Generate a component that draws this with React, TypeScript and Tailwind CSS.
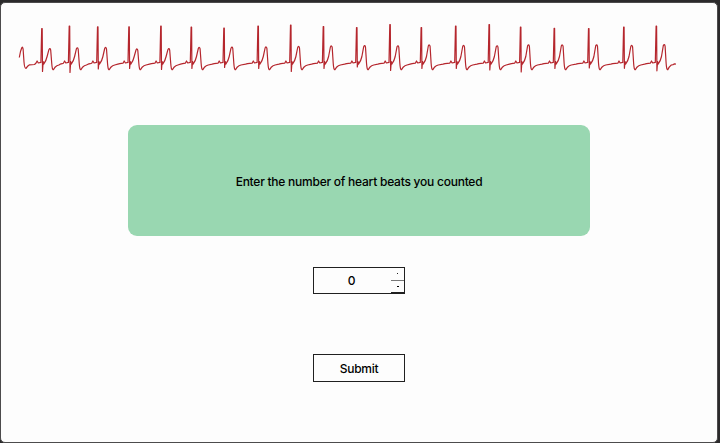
type Beat = { x: number; top: number; dip: number; wave: number };

const beats: Beat[] = [
  { x: 41.9, top: 28.5, dip: 71.5, wave: 47.2 },
  { x: 69.4, top: 26, dip: 72.5, wave: 46.3 },
  { x: 97.7, top: 26.8, dip: 69, wave: 46 },
  { x: 129, top: 26.8, dip: 68.5, wave: 47.5 },
  { x: 160.9, top: 26, dip: 69.5, wave: 47.2 },
  { x: 191.3, top: 27, dip: 68.5, wave: 46 },
  { x: 224, top: 28, dip: 67.5, wave: 45.7 },
  { x: 258.1, top: 26, dip: 68.5, wave: 45.5 },
  { x: 290.7, top: 25, dip: 71.5, wave: 45 },
  { x: 323.4, top: 26.6, dip: 68.5, wave: 44.5 },
  { x: 356.7, top: 27.5, dip: 67, wave: 44.2 },
  { x: 390, top: 24.6, dip: 70.5, wave: 44.3 },
  { x: 421.3, top: 27.5, dip: 68.5, wave: 43.5 },
  { x: 455.7, top: 26, dip: 68.5, wave: 44 },
  { x: 489.2, top: 24.6, dip: 70, wave: 44.3 },
  { x: 520.6, top: 27, dip: 72, wave: 43.4 },
  { x: 554.3, top: 28.3, dip: 68.5, wave: 43.5 },
  { x: 588.7, top: 28.6, dip: 68, wave: 43.4 },
  { x: 623.8, top: 27, dip: 68.3, wave: 44 },
  { x: 656.3, top: 26, dip: 70.8, wave: 43.1 },
];

// One cardiac cycle: P bump, QRS spike, T wave and the recovery slope.
function tracePath() {
  let d = "M19.3 57.5L20.5 51.5L21.7 48Q22.5 46 23.1 49L24 62Q24.5 68.5 26 68.4Q27.5 66 29.5 64.8L34.5 64.5";
  beats.forEach((b, i) => {
    const x = b.x;
    d += `L${x - 6} 63.2L${x - 4.8} 61L${x - 3.6} 63L${x - 1} 62.4`;
    d += `L${x - 0.2} ${b.top}L${x + 0.3} ${b.top}L${x + 0.6} ${b.dip}L${x + 1.3} 61.5L${x + 1.8} 64.2`;
    d += `Q${x + 4.2} 61 ${x + 5.2} 56.5L${x + 7} ${b.wave + 2.5}Q${x + 8.2} ${b.wave + 0.2} ${x + 8.8} ${b.wave + 3}`;
    d += `L${x + 9.8} 63Q${x + 10.3} 70.2 ${x + 11.5} 69.7`;
    const next = beats[i + 1];
    if (next) {
      const mid = (x + 16 + next.x - 7) / 2;
      d += `Q${x + 13} 66.7 ${x + 15} 65.7L${x + 17} 65L${mid} 64.2L${mid + 2} 63.7`;
    } else {
      d += `Q${x + 13} 66.5 ${x + 15} 65L${x + 17} 64.6L${x + 18} 63.8L${x + 19.6} 64.2`;
    }
  });
  return d;
}

function HeartTrace() {
  return (
    <svg className="block h-[84px] w-full shrink-0" viewBox="1 3 716 84" fill="none" preserveAspectRatio="none">
      <path d={tracePath()} stroke="#b5262d" strokeWidth="1.2" strokeLinejoin="round" />
    </svg>
  );
}

export default function App() {
  return (
    <div className="h-[443px] w-[720px] overflow-hidden bg-[#2b2a2b] pt-[2px] pr-[2px] font-['Inter','Liberation_Sans',sans-serif] text-[12px] font-medium tracking-[-0.24px] text-black">
      <main className="flex h-[441px] flex-col items-center rounded-[5px] border border-[#4c4b4c] bg-[#fdfdfd]">
        <HeartTrace />
        <section className="mt-[38px] flex h-[111px] w-[462px] shrink-0 items-center justify-center rounded-[9px] bg-[#99d7b1]">
          <p className="pt-[2px] leading-4">Enter the number of heart beats you counted</p>
        </section>
        <div className="mt-[31px] flex h-[27px] w-[92px] shrink-0 border border-[#202020] bg-[#fdfdfd]">
          <span className="flex flex-1 items-center justify-center pr-[2px] pt-px">0</span>
          <div className="flex w-[13px] flex-col">
            <button className="flex flex-1 items-center justify-center border-b border-[#777]" aria-label="Increase">
              <span className="size-px bg-[#222]" />
            </button>
            <button className="flex flex-1 items-center justify-center border-b border-[#202020]" aria-label="Decrease">
              <span className="h-px w-[2px] bg-black" />
            </button>
          </div>
        </div>
        <button className="mt-[60px] flex h-[28px] w-[92px] shrink-0 items-center justify-center border border-[#202020] pt-px">
          Submit
        </button>
      </main>
    </div>
  );
}
